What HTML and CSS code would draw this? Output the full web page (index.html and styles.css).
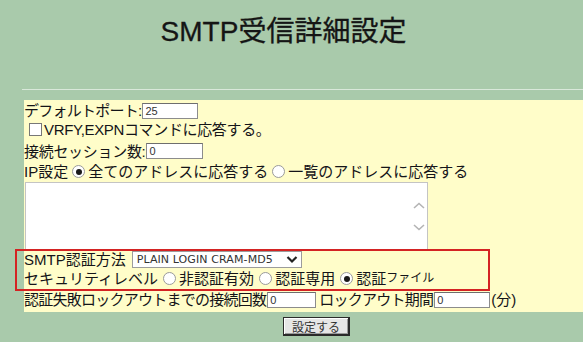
FILE: index.html
```html
<!DOCTYPE html>
<html lang="ja">
<head>
<meta charset="utf-8">
<title>SMTP受信詳細設定</title>
<link rel="stylesheet" href="styles.css">
</head>
<body>
<div class="page">
  <h1 class="title">SMTP受信詳細設定</h1>
  <hr class="rule">
  <form class="panel">
    <div class="row row-port"><span class="tight">デフォルトポート:</span><input class="field field-port" value="25"></div>
    <div class="row"><span class="check"></span><span class="tight3">VRFY,EXPNコマンドに応答する。</span></div>
    <div class="row row-sess"><span class="tight2">接続セッション数:</span><input class="field field-sess" value="0"></div>
    <div class="row">IP設定 <span class="radio on"></span>全てのアドレスに応答する <span class="radio"></span>一覧のアドレスに応答する</div>
    <div class="area">
      <textarea class="ta"></textarea>
      <svg class="arrows" width="12" height="30" viewBox="0 0 12 30"><path d="M1 6 L6 1.5 L11 6" fill="none" stroke="#b4b4b4" stroke-width="1.6"/><path d="M1 23 L6 27.5 L11 23" fill="none" stroke="#b4b4b4" stroke-width="1.6"/></svg>
    </div>
    <div class="row row-auth">SMTP認証方法 <span class="select"><span class="opt">PLAIN LOGIN CRAM-MD5</span><svg class="chev" width="12" height="9" viewBox="0 0 12 9"><path d="M1.5 2 L6 6.5 L10.5 2" fill="none" stroke="#222" stroke-width="2.2"/></svg></span></div>
    <div class="row row-sec">セキュリティレベル <span class="radio"></span>非認証有効 <span class="radio"></span>認証専用 <span class="radio on"></span>認証<span class="kana">ファイル</span></div>
    <div class="row row-lock"><span class="tight">認証失敗ロックアウトまでの接続回数</span><input class="field field-lock" value="0"> <span class="tight">ロックアウト期間</span><input class="field field-period" value="0">(分)</div>
    <div class="redbox"></div>
  </form>
  <div class="actions"><button type="button" class="btn">設定する</button></div>
</div>
</body>
</html>
```
FILE: styles.css
```css
html, body {
  margin: 0;
  padding: 0;
  background: #a9caab;
}
.page {
  width: 583px;
  height: 342px;
  overflow: hidden;
  font-family: "Liberation Sans", "Noto Sans CJK JP", sans-serif;
  color: #141418;
}
.title {
  margin: 0;
  padding: 12px 16px 0 0;
  height: 40px;
  line-height: 40px;
  text-align: center;
  font-family: "Liberation Sans", "Noto Sans CJK JP", sans-serif;
  font-size: 28px;
  font-weight: normal;
  color: #151515;
  -webkit-text-stroke: 0.3px #151515;
}
.rule {
  margin: 37px 0 0 22px;
  border: 0;
  height: 1px;
  background: #d9e8da;
}
.panel {
  position: relative;
  margin: 10px 0 0 24px;
  background: #fffdc9;
  padding: 1px 0 2px 0;
  font-size: 15px;
}
.row {
  height: 19px;
  line-height: 19px;
  white-space: nowrap;
  display: flex;
  align-items: center;
}
.tight { letter-spacing: -0.75px; }
.tight2 { letter-spacing: -0.3px; }
.tight3 { letter-spacing: -0.35px; }
.row-sess { height: 22px; margin-top: 1px; }
.row-lock { height: 21px; margin-top: 1px; }
.field {
  box-sizing: border-box;
  height: 16px;
  border: 1px solid #8c8c8c;
  border-top-color: #6e6e6e;
  background: #fff;
  font-family: "Liberation Sans", sans-serif;
  font-size: 11px;
  color: #333;
  padding: 0 2px;
  margin: 0 0 0 1px;
}
.field-port { width: 56px; }
.field-sess { width: 57px; }
.field-lock { width: 49px; margin-right: 3px; }
.field-period { width: 56px; margin-right: 1px; }
.check {
  display: inline-block;
  box-sizing: border-box;
  width: 13px;
  height: 13px;
  border: 1px solid #777;
  background: #fff;
  margin: 0 2px 0 5px;
}
.radio {
  display: inline-block;
  box-sizing: border-box;
  width: 13px;
  height: 13px;
  border: 1px solid #9a9a9a;
  border-radius: 50%;
  background: #fff;
  margin: 0 3px 0 4px;
  position: relative;
}
.radio.on::after {
  content: "";
  position: absolute;
  left: 2.5px;
  top: 2.5px;
  width: 6px;
  height: 6px;
  border-radius: 50%;
  background: #1a1a1a;
}
.kana { font-size: 12px; }
.area {
  position: relative;
  margin: 1px 0 0 1px;
  width: 403px;
  height: 68px;
}
.ta {
  display: block;
  box-sizing: border-box;
  width: 403px;
  height: 68px;
  margin: 0;
  border: 1px solid #c4c4c4;
  background: #fff;
  resize: none;
  overflow: hidden;
}
.arrows {
  position: absolute;
  right: 3px;
  top: 20px;
}
.select {
  display: inline-flex;
  align-items: center;
  justify-content: space-between;
  box-sizing: border-box;
  width: 170px;
  height: 17px;
  margin-left: 6px;
  padding: 0 3px 0 4px;
  border: 1px solid #9c9c9c;
  background: #fff;
  font-family: "DejaVu Sans", sans-serif;
  font-size: 11px;
  color: #333;
}
.opt { letter-spacing: 0.1px; }
.row-sec .radio { margin-left: 5px; }
.redbox {
  position: absolute;
  left: -9px;
  top: 149px;
  width: 475px;
  height: 42px;
  box-sizing: border-box;
  border: 2px solid #d42323;
  pointer-events: none;
}
.actions {
  display: flex;
  justify-content: center;
  padding: 5px 0 0 50px;
}
.btn {
  box-sizing: border-box;
  width: 67px;
  height: 19px;
  padding: 0;
  background: #e6e6e6;
  border: 1px solid #2a2a2a;
  border-right-width: 2px;
  border-bottom-width: 2px;
  box-shadow: inset 1px 1px 0 #fff, inset -1px -1px 0 #9a9a9a;
  font-family: "Noto Sans CJK JP", sans-serif;
  font-size: 12px;
  line-height: 15px;
  color: #333;
}
```
